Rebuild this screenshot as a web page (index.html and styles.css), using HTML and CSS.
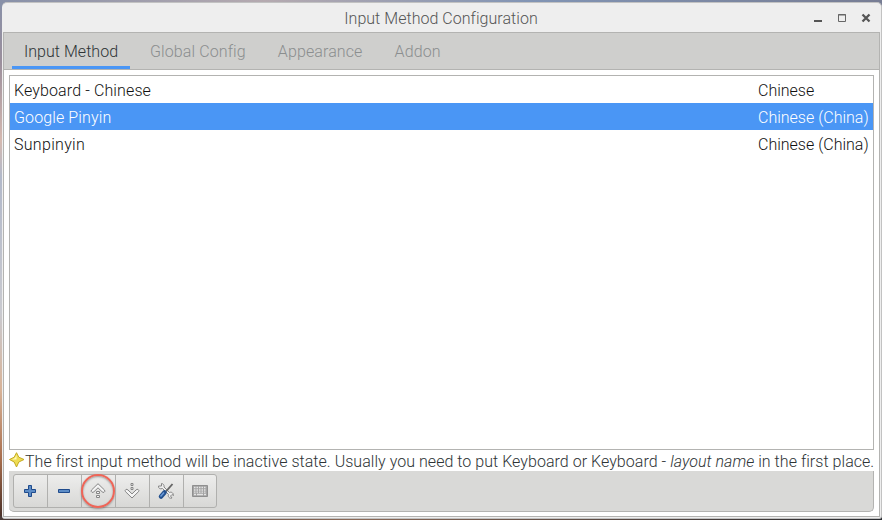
FILE: index.html
```html
<!DOCTYPE html>
<html lang="en">
<head>
<meta charset="utf-8">
<title>Input Method Configuration</title>
<link rel="stylesheet" href="styles.css">
</head>
<body>
<div class="window">
  <header class="titlebar">
    <h1>Input Method Configuration</h1>
    <svg class="controls" width="60" height="12" viewBox="0 0 60 12">
      <path d="M1 9h8" stroke="#555" stroke-width="2"/>
      <path d="M25.500 2.500h7v7h-7zM25 3h8" fill="none" stroke="#666"/>
      <path d="M49.500 2.500l7 7m0-7l-7 7" stroke="#555" stroke-width="2.300"/>
    </svg>
  </header>
  <main class="client">
    <nav class="tabs">
      <span class="tab active">Input Method</span>
      <span class="tab">Global Config</span>
      <span class="tab">Appearance</span>
      <span class="tab">Addon</span>
    </nav>
    <section class="page">
      <div class="list">
        <div class="row"><span class="name">Keyboard - Chinese</span><span class="lang">Chinese</span></div>
        <div class="row selected"><span class="name">Google Pinyin</span><span class="lang">Chinese (China)</span></div>
        <div class="row"><span class="name">Sunpinyin</span><span class="lang">Chinese (China)</span></div>
      </div>
      <div class="hint">
        <svg width="16" height="16" viewBox="0 0 16 16">
          <path d="M7.500 .7L9.800 5.200 15 7.500 9.800 10 7.500 15 5.200 10 .5 7.500 5.200 5.200z" fill="#eedc54" stroke="#c4ab22"/>
          <path d="M7.500 3v4.500H3l3-1.500z" fill="#fffbc0"/>
        </svg>
        <p>The first input method will be inactive state. Usually you need to put Keyboard or Keyboard - <em>layout name</em> in the first place.</p>
      </div>
      <div class="toolbar">
        <div class="buttons">
          <span class="button"><svg width="16" height="16" viewBox="0 0 16 16"><path d="M6.500 2.500h3v4h4v3h-4v4h-3v-4h-4v-3h4z" fill="#5c8cc6" stroke="#1f4b8c"/></svg></span>
          <span class="button"><svg width="16" height="16" viewBox="0 0 16 16"><path d="M2.500 6.500h11v3h-11z" fill="#5c8cc6" stroke="#1f4b8c"/></svg></span>
          <span class="button marked"><svg width="16" height="16" viewBox="0 0 16 16"><path d="M8 .7l6.500 6.300q1 1.500-.5 2.300-1 .4-2-.6L8 4.800 4 8.700q-1 1-2 .6-1.500-.8-.5-2.300zM6.500 8.500h3v2h-3zM6.500 12.500h3v2h-3z" fill="#f4f4f4" stroke="#858585"/></svg></span>
          <span class="button"><svg width="16" height="16" viewBox="0 0 16 16"><path d="M8 15l6.500-6.300q1-1.500-.5-2.300-1-.4-2 .6l-4 3.900L4 7q-1-1-2-.6-1.500.8-.5 2.300zM7 .5h2v2H7zM7 4.500h2v2H7z" fill="#f4f4f4" stroke="#858585"/></svg></span>
          <span class="button"><svg width="18" height="18" viewBox="0 0 18 18"><path d="M4.500 1.500L4.500 4 1.500 4C1 6 3 7.500 5.500 6.500l6 6c-1 2 1 4.500 3.500 3.500l-1.500-2 1.500-1.500 1.500 1c0-2.500-2-4-4-3L7 5c.5-2-1-3.500-2.500-3.500z" fill="#eee" stroke="#888"/><path d="M15.500 2L9 9.500" stroke="#666" stroke-width="1.900"/><path d="M7.500 10.500L4 14.500" stroke="#23508e" stroke-width="4.500" stroke-linecap="round"/><path d="M7 10.500l-3.500 4" stroke="#6b9bd8" stroke-width="1.500"/></svg></span>
          <span class="button"><svg width="16" height="12" viewBox="0 0 16 12"><path d="M.5 .5h15v11H.5z" fill="#a4a4a4" stroke="#8f8f8f"/><path d="M2 2.500h12M2 5h12M2 7.200h12" stroke="#e4e4e4" stroke-width="1.300" stroke-dasharray="1.500 1"/><path d="M2 9.500h2m1 0h6m1 0h2" stroke="#e4e4e4" stroke-width="1.300"/></svg></span>
        </div>
      </div>
    </section>
  </main>
</div>
</body>
</html>
```
FILE: styles.css
```css
*, *::after { box-sizing: border-box; }
body {
  margin: 0;
  height: 520px;
  padding: 2px 0 0 2px;
  overflow: hidden;
  background:
    linear-gradient(90deg, #8790a8, #b5aab0 30%, #8194b4 60%, #777d94) 0 0 / 100% 8px no-repeat,
    linear-gradient(90deg, #4a3b38, #8b6a58 40%, #292b30) 0 100% / 100% 4px no-repeat,
    linear-gradient(#8790a8, #9b8f9c 12%, #d5b9b0 27%, #b2b9ca 34%, #c9cad0 60%, #d8b398 75%, #a96f4e 88%, #452d26);
  font: 300 16px/20px Roboto, sans-serif;
  color: #111;
}
.window {
  width: 880px;
  height: 517px;
  padding: 0 1px 1px 1px;
  border: 1px solid #c2c2c2;
  border-left-width: 0;
  border-radius: 5px 5px 3px 3px;
  background: #eee;
}
.titlebar {
  display: flex;
  align-items: center;
  height: 29px;
  padding-right: 7px;
}
h1 {
  flex: 1;
  margin: 0;
  padding: 2px 0 0 66px;
  font: inherit;
  letter-spacing: .04px;
  text-align: center;
  color: #555;
}
.controls { margin-top: 1px; }
.client {
  height: 485px;
  border: 1px solid #b3b3b1;
  background: #fff;
}
.tabs {
  display: flex;
  gap: 8px;
  height: 37px;
  padding-left: 8px;
  border-bottom: 1px solid #b3b3b1;
  background: #cfcfcd;
}
.tab {
  padding: 9px 12px 0;
  letter-spacing: .11px;
  color: #8b8e8f;
}
.active {
  width: 118px;
  letter-spacing: .03px;
  color: #2e3436;
  border-bottom: 3px solid #4a96f5;
  white-space: nowrap;
}
.page { padding: 5px; }
.list {
  height: 375px;
  border: 1px solid #b3b3b1;
}
.row {
  display: flex;
  justify-content: space-between;
  height: 27px;
  padding: 5px 4px 0;
}
.name { letter-spacing: .12px; }
.row:last-child .name { letter-spacing: .3px; }
.lang { width: 111px; white-space: nowrap; }
.selected { background: #4a96f5; color: #fff; }
.hint {
  display: flex;
  align-items: center;
  height: 21px;
  color: #2e3436;
}
.hint svg { flex: none; margin-bottom: 1px; }
.hint p {
  margin: 3px 0 0;
  letter-spacing: .041px;
  white-space: nowrap;
}
.toolbar {
  height: 41px;
  padding: 3px 4px;
  border: solid #b3b3b1;
  border-width: 0 1px 1px 0;
  border-radius: 0 0 5px 5px;
  background: #d9d9d7;
}
.buttons {
  display: flex;
  width: 204px;
  height: 34px;
  border: 1px solid #b0b0ae;
  border-radius: 3px;
  background: linear-gradient(#ededec, #d8d8d6);
}
.button {
  position: relative;
  flex: 0 0 34px;
  display: flex;
  align-items: center;
  justify-content: center;
  padding-right: 2px;
}
.button:first-child { flex-basis: 33px; }
.button:last-child { flex: 1; padding-right: 0; }
.button + .button { border-left: 1px solid #b0b0ae; }
.marked::after {
  content: "";
  position: absolute;
  left: -1px;
  top: -1px;
  width: 34px;
  height: 34px;
  border: 2px solid #ee6558;
  border-radius: 50%;
  box-shadow: 0 1px 2px #5558, inset 0 1px 2px #5558;
}
```
